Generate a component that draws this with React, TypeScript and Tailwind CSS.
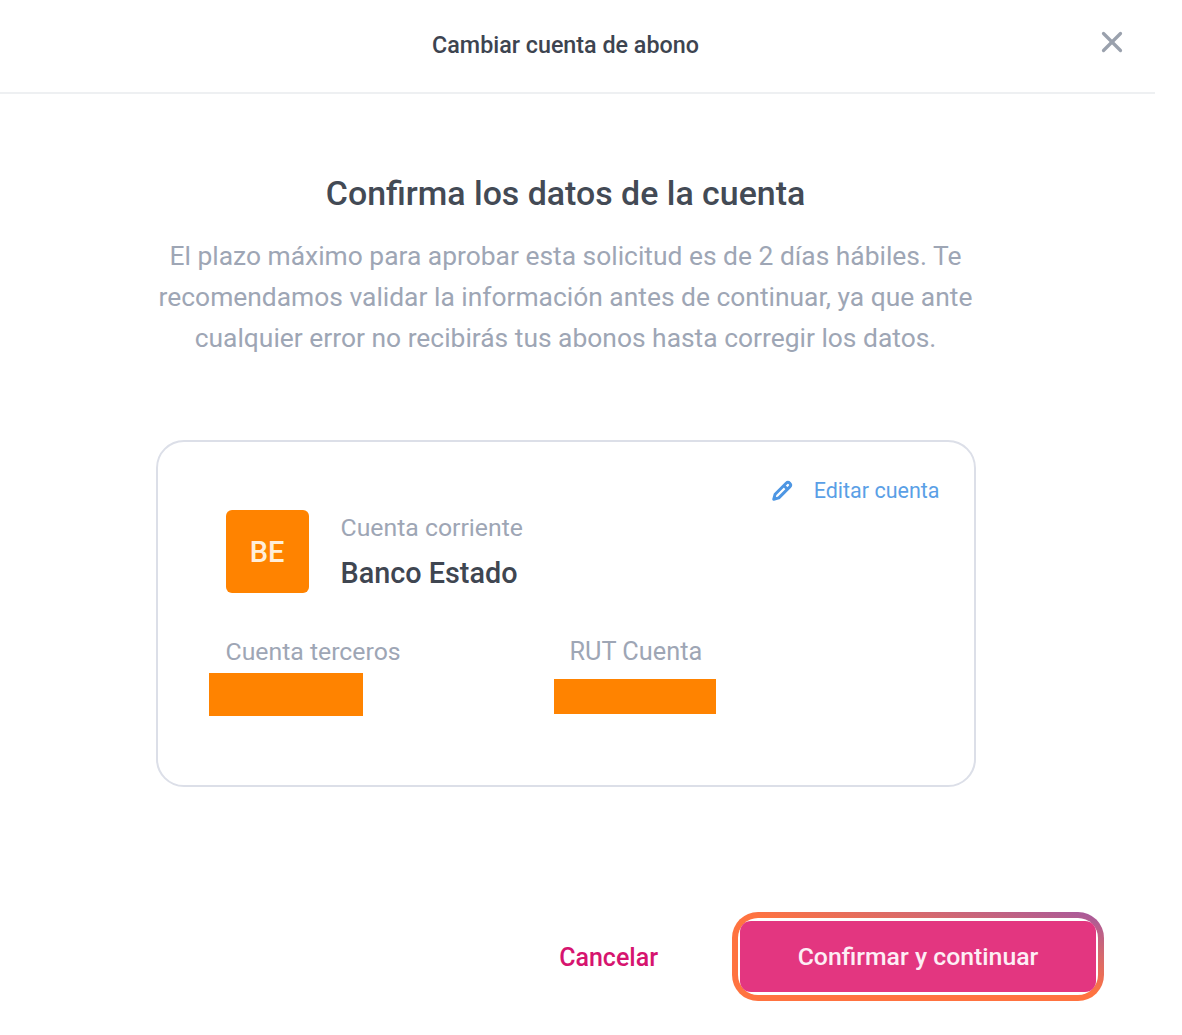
import React from "react";
import { X } from "lucide-react";

const App: React.FC = () => {
  return (
    <div className="w-[1182px] h-[1035px] bg-white overflow-hidden font-['Roboto',sans-serif]">
      <header className="w-[1155px] h-[94px] border-b-2 border-[#eef0f2] flex items-center">
        <h1 className="w-[1131px] text-center text-[23.3px] font-medium text-[#3d4450] leading-none">
          Cambiar cuenta de abono
        </h1>
        <X className="w-[34px] h-[34px] text-[#9aa1ad] ml-[-36px] mt-[-8px]" strokeWidth={2.3} />
      </header>

      <main className="w-[1131px] flex flex-col items-center">
        <h2 className="mt-[80px] text-[33.9px] leading-10 font-medium text-[#434a55]">
          Confirma los datos de la cuenta
        </h2>
        <p className="mt-[22px] w-[860px] text-center text-[26.4px] leading-[41px] text-[#9ea6b5]">
          El plazo máximo para aprobar esta solicitud es de 2 días hábiles. Te
          <br />
          recomendamos validar la información antes de continuar, ya que ante
          <br />
          cualquier error no recibirás tus abonos hasta corregir los datos.
        </p>

        <section className="mt-[81px] w-[820px] h-[347px] rounded-[28px] border-2 border-[#dcdfe8] pt-[35px] pl-[51px] pr-[34px]">
          <div className="flex justify-end items-center gap-[21px]">
            <svg viewBox="0 0 24 24" className="w-[22px] h-[22px] text-[#4d96e3]" fill="none" stroke="currentColor" strokeWidth={3.2} strokeLinejoin="round">
              <path d="M16.5 3.5a2.8 2.8 0 0 1 4 4L8.5 19.5 3 21l1.5-5.5z" />
              <path d="M14 6l4 4" />
            </svg>
            <span className="text-[21.5px] leading-7 text-[#5a9fe6]">Editar cuenta</span>
          </div>

          <div className="flex mt-[5px] ml-[17px]">
            <div className="w-[83px] h-[83px] rounded-[6px] bg-[#ff8300] flex items-center justify-center text-[29px] font-medium text-[#ffeeda] pt-[2px]">
              BE
            </div>
            <div className="ml-[32px]">
              <div className="text-[24.8px] leading-[36px] text-[#9ea6b5]">Cuenta corriente</div>
              <div className="mt-[9px] text-[28.8px] leading-[36px] font-medium text-[#3f4651]">Banco Estado</div>
            </div>
          </div>

          <div className="flex mt-[41px]">
            <div className="w-[345px]">
              <div className="ml-[17px] text-[24.8px] leading-[36px] text-[#9ea6b5]">Cuenta terceros</div>
              <div className="mt-[3px] w-[154px] h-[43px] bg-[#ff8300]" />
            </div>
            <div>
              <div className="ml-[16px] text-[25.3px] leading-[36px] text-[#9ea6b5]">RUT Cuenta</div>
              <div className="mt-[9px] w-[162px] h-[35px] bg-[#ff8300]" />
            </div>
          </div>
        </section>
      </main>

      <footer className="mt-[125px] w-[1104px] flex items-center justify-end">
        <button className="mr-[74px] pt-[3px] text-[25px] font-medium text-[#d6146f]">Cancelar</button>
        <div className="w-[372px] h-[89px] rounded-[26px] p-[6px] bg-[linear-gradient(13deg,#ff7340_0%,#ff7340_52%,#d5696f_75%,#a4589f_100%)]">
          <div className="w-full h-full rounded-[20px] bg-white py-[3px] px-[2px]">
            <button className="w-full h-full rounded-[11px] bg-[#e33680] pt-[1px] text-[24.8px] font-medium text-[#fdeef5]">
              Confirmar y continuar
            </button>
          </div>
        </div>
      </footer>
    </div>
  );
};

export default App;
